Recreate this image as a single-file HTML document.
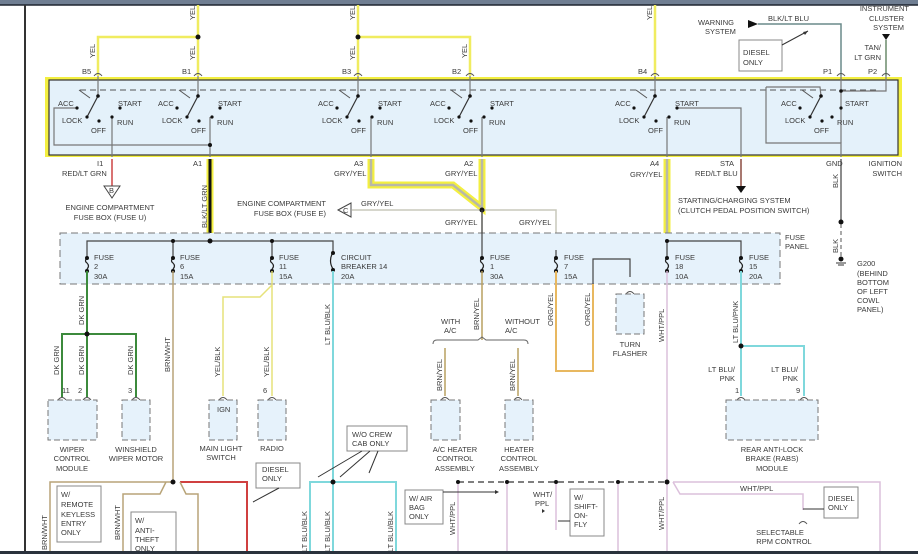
<!DOCTYPE html>
<html><head><meta charset="utf-8"><style>
html,body{margin:0;padding:0;background:#fff}
svg{display:block}
text{font-family:"Liberation Sans",sans-serif;font-size:7.5px;fill:#3a3a3a}
</style></head><body>
<svg width="918" height="554" viewBox="0 0 918 554" xmlns="http://www.w3.org/2000/svg">
<defs>
<g id="sw">
<line x1="-19" y1="-6" x2="-8" y2="2" stroke="#555" stroke-width="1"/>
<line x1="0" y1="0" x2="-11" y2="21" stroke="#333" stroke-width="1.2"/>
<circle cx="0" cy="0" r="1.8" fill="#111"/>
<circle cx="-21" cy="12" r="1.6" fill="#111"/>
<circle cx="-11" cy="21" r="1.6" fill="#111"/>
<circle cx="1" cy="25" r="1.6" fill="#111"/>
<circle cx="14" cy="21" r="1.6" fill="#111"/>
<circle cx="22" cy="12" r="1.6" fill="#111"/>
<text x="-40" y="10">ACC</text>
<text x="-36" y="27">LOCK</text>
<text x="-7" y="37">OFF</text>
<text x="19" y="29">RUN</text>
<text x="20" y="10">START</text>
</g>
<path id="arc" d="M-4 2q4-5 8 0" stroke="#555" stroke-width="1" fill="none"/>
</defs>
<rect x="0" y="0" width="918" height="5" fill="#6f7e92"/>
<line x1="0" y1="5" x2="918" y2="5" stroke="#1e2530" stroke-width="1.5"/>
<line x1="25" y1="5" x2="25" y2="554" stroke="#333" stroke-width="2"/>

<g stroke="#f0ec60" stroke-width="2.5" fill="none">
<path d="M98 76V37H198"/><path d="M198 5V76"/><path d="M358 5V76"/><path d="M358 37H470V76"/><path d="M655 5V76"/>
</g>
<g fill="#111"><circle cx="198" cy="37" r="2.5"/><circle cx="358" cy="37" r="2.5"/></g>
<g font-size="7">
<text transform="translate(95,58) rotate(-90)">YEL</text>
<text transform="translate(195,20) rotate(-90)">YEL</text>
<text transform="translate(195,60) rotate(-90)">YEL</text>
<text transform="translate(355,20) rotate(-90)">YEL</text>
<text transform="translate(355,60) rotate(-90)">YEL</text>
<text transform="translate(467,58) rotate(-90)">YEL</text>
<text transform="translate(652,20) rotate(-90)">YEL</text>
</g>
<text x="82" y="74">B5</text><text x="182" y="74">B1</text><text x="342" y="74">B3</text><text x="452" y="74">B2</text><text x="638" y="74">B4</text><text x="823" y="74">P1</text><text x="868" y="74">P2</text>

<path d="M841 76V24H758" stroke="#6a8a8a" stroke-width="1.5" fill="none"/>
<path d="M748 20L758 24L748 28Z" fill="#111"/>
<text x="768" y="21">BLK/LT BLU</text>
<text x="698" y="25">WARNING</text><text x="705" y="34">SYSTEM</text>
<rect x="739" y="40" width="43" height="31" fill="#fff" stroke="#888"/>
<text x="743" y="55">DIESEL</text><text x="743" y="65">ONLY</text>
<line x1="782" y1="45" x2="808" y2="31" stroke="#333"/>
<path d="M808 31l-5 1 2 3z" fill="#333"/>
<path d="M886 76V40" stroke="#6a8a6a" stroke-width="1.5"/>
<path d="M882 34H890L886 40Z" fill="#111"/>
<text x="909" y="11" text-anchor="end">INSTRUMENT</text><text x="904" y="21" text-anchor="end">CLUSTER</text><text x="904" y="30" text-anchor="end">SYSTEM</text>
<text x="881" y="50" text-anchor="end">TAN/</text><text x="881" y="60" text-anchor="end">LT GRN</text>

<rect x="45" y="77" width="857" height="80" fill="#f3ef40" />
<rect x="49" y="80" width="849" height="75" fill="#e4f1fa" stroke="#333" stroke-width="1.2"/>
<line x1="80" y1="90" x2="880" y2="90" stroke="#555" stroke-dasharray="6,4"/>
<g stroke="#777" stroke-width="1.2" fill="none">
<path d="M98 76V96M198 76V96M358 76V96M470 76V96M655 76V96"/>
<path d="M77 108H54V145H210"/>
<path d="M112 117V157M210 117V157M371 117V157M482 117V157M667 117V157"/>
<path d="M676 108H741V157"/>
<path d="M766 87H820L821 96M766 87V143H841V157"/>
<path d="M841 76V143"/>
<path d="M841 91H886V76"/>
</g>
<g>
<use href="#arc" x="98" y="74"/><use href="#arc" x="198" y="74"/><use href="#arc" x="358" y="74"/><use href="#arc" x="470" y="74"/><use href="#arc" x="655" y="74"/><use href="#arc" x="841" y="74"/><use href="#arc" x="886" y="74"/>
</g>
<circle cx="210" cy="145" r="2" fill="#111"/><circle cx="841" cy="91" r="1.8" fill="#111"/>
<use href="#sw" x="98" y="96"/><use href="#sw" x="198" y="96"/><use href="#sw" x="358" y="96"/><use href="#sw" x="470" y="96"/><use href="#sw" x="655" y="96"/>
<g transform="translate(821,96)">
<line x1="-19" y1="-6" x2="-8" y2="2" stroke="#555"/><line x1="0" y1="0" x2="-11" y2="21" stroke="#333" stroke-width="1.2"/>
<circle r="1.8" fill="#111"/><circle cx="-21" cy="12" r="1.6" fill="#111"/><circle cx="-11" cy="21" r="1.6" fill="#111"/><circle cx="1" cy="25" r="1.6" fill="#111"/><circle cx="11" cy="21" r="1.6" fill="#111"/><circle cx="20" cy="12" r="1.6" fill="#111"/>
<text x="-40" y="10">ACC</text><text x="-36" y="27">LOCK</text><text x="-7" y="37">OFF</text><text x="16" y="29">RUN</text><text x="24" y="10">START</text>
</g>

<text x="97" y="166">I1</text><text x="62" y="176">RED/LT GRN</text>
<path d="M112 159V186" stroke="#c44" stroke-width="1.5"/>
<path d="M104 186H120L112 198Z" fill="#fff" stroke="#444"/><text x="109" y="193" font-size="6">B</text>
<text x="110" y="210" text-anchor="middle">ENGINE COMPARTMENT</text><text x="110" y="220" text-anchor="middle">FUSE BOX (FUSE U)</text>
<text x="193" y="166">A1</text>
<path d="M210 159V241" stroke="#f3ef40" stroke-width="7"/><path d="M210 159V241" stroke="#111" stroke-width="3"/>
<text transform="translate(207,228) rotate(-90)" font-size="7">BLK/LT GRN</text>
<path d="M371 159V185H453L482 208V159" stroke="#f3ef40" stroke-width="7" fill="none"/>
<path d="M371 159V185H453L482 208V159" stroke="#b8b8a8" stroke-width="2.5" fill="none"/>
<text x="354" y="166">A3</text><text x="334" y="176">GRY/YEL</text>
<text x="464" y="166">A2</text><text x="445" y="176">GRY/YEL</text>
<path d="M352 210H482V250M482 210H556V250" stroke="#c8c8bc" stroke-width="1.5" fill="none"/>
<circle cx="482" cy="210" r="2.5" fill="#111"/>
<path d="M338 210L351 203V217Z" fill="#fff" stroke="#444"/><text x="343" y="213" font-size="6">C</text>
<text x="361" y="206">GRY/YEL</text>
<text x="326" y="206" text-anchor="end">ENGINE COMPARTMENT</text><text x="326" y="216" text-anchor="end">FUSE BOX (FUSE E)</text>
<text x="445" y="225">GRY/YEL</text><text x="519" y="225">GRY/YEL</text>
<path d="M667 159V241" stroke="#f3ef40" stroke-width="7"/><path d="M667 159V241" stroke="#b8b8a8" stroke-width="2.5"/>
<text x="650" y="166">A4</text><text x="630" y="177">GRY/YEL</text>
<path d="M741 159V186" stroke="#8a4a40" stroke-width="1.5"/><path d="M736 186H746L741 193Z" fill="#111"/>
<text x="720" y="166">STA</text><text x="695" y="176">RED/LT BLU</text>
<text x="678" y="203">STARTING/CHARGING SYSTEM</text><text x="678" y="213">(CLUTCH PEDAL POSITION SWITCH)</text>
<path d="M841 159V222" stroke="#666" stroke-width="1.5"/><circle cx="841" cy="222" r="2.5" fill="#111"/>
<path d="M841 224V258" stroke="#555" stroke-dasharray="4,3"/><circle cx="841" cy="259" r="2.5" fill="#111"/>
<path d="M836 263H846M838 265H844" stroke="#333"/>
<text transform="translate(838,188) rotate(-90)" font-size="7">BLK</text><text transform="translate(838,253) rotate(-90)" font-size="7">BLK</text>
<text x="826" y="166">GND</text><text x="902" y="166" text-anchor="end">IGNITION</text><text x="902" y="176" text-anchor="end">SWITCH</text>
<text x="857" y="266">G200</text><text x="857" y="276">(BEHIND</text><text x="857" y="285">BOTTOM</text><text x="857" y="294">OF LEFT</text><text x="857" y="303">COWL</text><text x="857" y="312">PANEL)</text>

<rect x="60" y="233" width="720" height="51" fill="#e6f2fb" stroke="#777" stroke-dasharray="7,4"/>
<text x="785" y="240">FUSE</text><text x="785" y="249">PANEL</text>
<path d="M87 258V241H333V252M482 210V258M556 250V258M667 241H741V258M173 241V258M272 241V258M667 241V258M593 284V259H630V277" stroke="#444" stroke-width="1.2" fill="none"/>
<g fill="#111"><circle cx="173" cy="241" r="2"/><circle cx="210" cy="241" r="2.5"/><circle cx="272" cy="241" r="2"/><circle cx="667" cy="241" r="2"/></g>
<g stroke="#222" stroke-width="1.2" fill="none">
<path d="M87 258q-3 3 0 5q3 3 0 6"/><path d="M173 258q-3 3 0 5q3 3 0 6"/><path d="M272 258q-3 3 0 5q3 3 0 6"/><path d="M482 258q-3 3 0 5q3 3 0 6"/><path d="M556 258q-3 3 0 5q3 3 0 6"/><path d="M667 258q-3 3 0 5q3 3 0 6"/><path d="M741 258q-3 3 0 5q3 3 0 6"/>
<path d="M333 252q-5 9 0 17"/>
</g>
<g fill="#111">
<circle cx="87" cy="258" r="2"/><circle cx="87" cy="271" r="2"/><circle cx="173" cy="258" r="2"/><circle cx="173" cy="271" r="2"/><circle cx="272" cy="258" r="2"/><circle cx="272" cy="271" r="2"/><circle cx="333" cy="253" r="2"/><circle cx="333" cy="270" r="2"/><circle cx="482" cy="258" r="2"/><circle cx="482" cy="271" r="2"/><circle cx="556" cy="258" r="2"/><circle cx="556" cy="271" r="2"/><circle cx="667" cy="258" r="2"/><circle cx="667" cy="271" r="2"/><circle cx="741" cy="258" r="2"/><circle cx="741" cy="271" r="2"/>
</g>
<g>
<text x="94" y="260">FUSE</text><text x="94" y="269">2</text><text x="94" y="279">30A</text>
<text x="180" y="260">FUSE</text><text x="180" y="269">6</text><text x="180" y="279">15A</text>
<text x="279" y="260">FUSE</text><text x="279" y="269">11</text><text x="279" y="279">15A</text>
<text x="341" y="260">CIRCUIT</text><text x="341" y="269">BREAKER 14</text><text x="341" y="279">20A</text>
<text x="490" y="260">FUSE</text><text x="490" y="269">1</text><text x="490" y="279">30A</text>
<text x="564" y="260">FUSE</text><text x="564" y="269">7</text><text x="564" y="279">15A</text>
<text x="675" y="260">FUSE</text><text x="675" y="269">18</text><text x="675" y="279">10A</text>
<text x="749" y="260">FUSE</text><text x="749" y="269">15</text><text x="749" y="279">20A</text>
</g>

<g fill="none" stroke-width="2">
<path d="M87 271V397M62 397V334H136V397" stroke="#3c8a3c"/>
<path d="M173 271V482" stroke="#b8a478" stroke-width="1.5"/>
<path d="M272 271V396M272 285L260 297H223V396" stroke="#e6e27a" stroke-width="1.5"/>
<path d="M333 271V554M310 554V482H396V554" stroke="#7fd8dc"/>
<path d="M482 271V340M445 396V348M518 396V348" stroke="#b8a060" stroke-width="1.5"/>
<path d="M556 271V371H593V284" stroke="#e8b860"/>
<path d="M667 271V554M673 482L680 494H803V510" stroke="#dcc0dc" stroke-width="1.5"/>
<path d="M741 271V396M741 346H804V396" stroke="#7fd8dc"/>
<path d="M180 482H247V554" stroke="#d04040"/>
<path d="M173 482H50V554M166 482L160 494H123V554M180 482L186 494H198V554" stroke="#b8a478" stroke-width="1.5"/>
<path d="M458 482V554M507 482V554M618 482V554M673 482H880V554" stroke="#dcc0dc" stroke-width="1.5"/>
</g>
<path d="M458 482H667" stroke="#555" stroke-width="1.5" stroke-dasharray="6,4"/>
<path d="M556 482V530" stroke="#dcc0dc" stroke-width="1.5"/>
<g fill="#111"><circle cx="87" cy="334" r="2.5"/><circle cx="173" cy="482" r="2.5"/><circle cx="333" cy="482" r="2.5"/><circle cx="741" cy="346" r="2.5"/><circle cx="458" cy="482" r="2"/><circle cx="507" cy="482" r="2"/><circle cx="556" cy="482" r="2"/><circle cx="618" cy="482" r="2"/><circle cx="667" cy="482" r="2.5"/></g>
<g>
<use href="#arc" x="62" y="398"/><use href="#arc" x="87" y="398"/><use href="#arc" x="136" y="398"/><use href="#arc" x="223" y="398"/><use href="#arc" x="272" y="398"/><use href="#arc" x="445" y="398"/><use href="#arc" x="518" y="398"/><use href="#arc" x="741" y="398"/><use href="#arc" x="804" y="398"/><use href="#arc" x="630" y="292"/><use href="#arc" x="803" y="522"/>
</g>
<path d="M433 344q0-4 4-4H478l4-3 4 3H524q4 0 4 4" stroke="#666" fill="none"/>
<text x="441" y="324">WITH</text><text x="444" y="333">A/C</text><text x="505" y="324">WITHOUT</text><text x="505" y="333">A/C</text>

<g font-size="7">
<text transform="translate(84,325) rotate(-90)">DK GRN</text>
<text transform="translate(59,375) rotate(-90)">DK GRN</text>
<text transform="translate(84,375) rotate(-90)">DK GRN</text>
<text transform="translate(133,375) rotate(-90)">DK GRN</text>
<text transform="translate(170,372) rotate(-90)">BRN/WHT</text>
<text transform="translate(220,377) rotate(-90)">YEL/BLK</text>
<text transform="translate(269,377) rotate(-90)">YEL/BLK</text>
<text transform="translate(330,345) rotate(-90)">LT BLU/BLK</text>
<text transform="translate(479,330) rotate(-90)">BRN/YEL</text>
<text transform="translate(442,391) rotate(-90)">BRN/YEL</text>
<text transform="translate(515,391) rotate(-90)">BRN/YEL</text>
<text transform="translate(553,326) rotate(-90)">ORG/YEL</text>
<text transform="translate(590,326) rotate(-90)">ORG/YEL</text>
<text transform="translate(664,342) rotate(-90)">WHT/PPL</text>
<text transform="translate(738,343) rotate(-90)">LT BLU/PNK</text>
<text transform="translate(47,550) rotate(-90)">BRN/WHT</text>
<text transform="translate(120,540) rotate(-90)">BRN/WHT</text>
<text transform="translate(307,552) rotate(-90)">LT BLU/BLK</text>
<text transform="translate(330,552) rotate(-90)">LT BLU/BLK</text>
<text transform="translate(393,552) rotate(-90)">LT BLU/BLK</text>
<text transform="translate(664,530) rotate(-90)">WHT/PPL</text>
<text transform="translate(455,535) rotate(-90)">WHT/PPL</text>
</g>

<g fill="#e6f2fb" stroke="#777" stroke-dasharray="6,3">
<rect x="48" y="400" width="49" height="40"/><rect x="122" y="400" width="28" height="40"/>
<rect x="209" y="400" width="28" height="40"/><rect x="258" y="400" width="28" height="40"/>
<rect x="431" y="400" width="29" height="40"/><rect x="505" y="400" width="28" height="40"/>
<rect x="616" y="294" width="28" height="40"/><rect x="726" y="400" width="92" height="40"/>
</g>
<text x="62" y="393">11</text><text x="78" y="393">2</text><text x="128" y="393">3</text><text x="263" y="393">6</text><text x="735" y="393">1</text><text x="796" y="393">9</text>
<text x="217" y="412">IGN</text>
<text x="72" y="452" text-anchor="middle">WIPER</text><text x="72" y="461" text-anchor="middle">CONTROL</text><text x="72" y="471" text-anchor="middle">MODULE</text>
<text x="136" y="452" text-anchor="middle">WINSHIELD</text><text x="136" y="461" text-anchor="middle">WIPER MOTOR</text>
<text x="221" y="451" text-anchor="middle">MAIN LIGHT</text><text x="221" y="460" text-anchor="middle">SWITCH</text>
<text x="272" y="451" text-anchor="middle">RADIO</text>
<text x="630" y="347" text-anchor="middle">TURN</text><text x="630" y="356" text-anchor="middle">FLASHER</text>
<text x="455" y="452" text-anchor="middle">A/C HEATER</text><text x="455" y="461" text-anchor="middle">CONTROL</text><text x="455" y="471" text-anchor="middle">ASSEMBLY</text>
<text x="519" y="452" text-anchor="middle">HEATER</text><text x="519" y="461" text-anchor="middle">CONTROL</text><text x="519" y="471" text-anchor="middle">ASSEMBLY</text>
<text x="772" y="452" text-anchor="middle">REAR ANTI-LOCK</text><text x="772" y="461" text-anchor="middle">BRAKE (RABS)</text><text x="772" y="471" text-anchor="middle">MODULE</text>
<text x="735" y="372" text-anchor="end">LT BLU/</text><text x="735" y="381" text-anchor="end">PNK</text>
<text x="798" y="372" text-anchor="end">LT BLU/</text><text x="798" y="381" text-anchor="end">PNK</text>

<g fill="#fff" stroke="#888">
<rect x="347" y="426" width="60" height="25"/><rect x="256" y="463" width="44" height="25"/>
<rect x="57" y="486" width="44" height="56"/><rect x="131" y="512" width="45" height="42"/>
<rect x="405" y="490" width="38" height="34"/><rect x="570" y="489" width="34" height="47"/>
<rect x="824" y="487" width="34" height="31"/>
</g>
<text x="352" y="437">W/O CREW</text><text x="352" y="446">CAB ONLY</text>
<text x="262" y="472">DIESEL</text><text x="262" y="481">ONLY</text>
<text x="61" y="497">W/</text><text x="61" y="507">REMOTE</text><text x="61" y="517">KEYLESS</text><text x="61" y="526">ENTRY</text><text x="61" y="535">ONLY</text>
<text x="135" y="523">W/</text><text x="135" y="533">ANTI-</text><text x="135" y="542">THEFT</text><text x="135" y="551">ONLY</text>
<text x="409" y="501">W/ AIR</text><text x="409" y="510">BAG</text><text x="409" y="519">ONLY</text>
<text x="574" y="500">W/</text><text x="574" y="509">SHIFT-</text><text x="574" y="518">ON-</text><text x="574" y="527">FLY</text>
<text x="828" y="501">DIESEL</text><text x="828" y="510">ONLY</text>
<text x="533" y="497">WHT/</text><text x="535" y="506">PPL</text>
<text x="740" y="491">WHT/PPL</text>
<text x="780" y="535" text-anchor="middle">SELECTABLE</text><text x="784" y="544" text-anchor="middle">RPM CONTROL</text>
<g stroke="#333"><path d="M362 451L318 477M370 451L340 477M378 451L369 473M279 488L253 502M824 509H803M570 521H558M443 492H495"/></g>
<path d="M545 511l-3-2v4z" fill="#333"/><path d="M499 492l-4-2v4z" fill="#333"/>

<rect x="0" y="551" width="918" height="3" fill="#2a323c"/>
</svg>
</body></html>
